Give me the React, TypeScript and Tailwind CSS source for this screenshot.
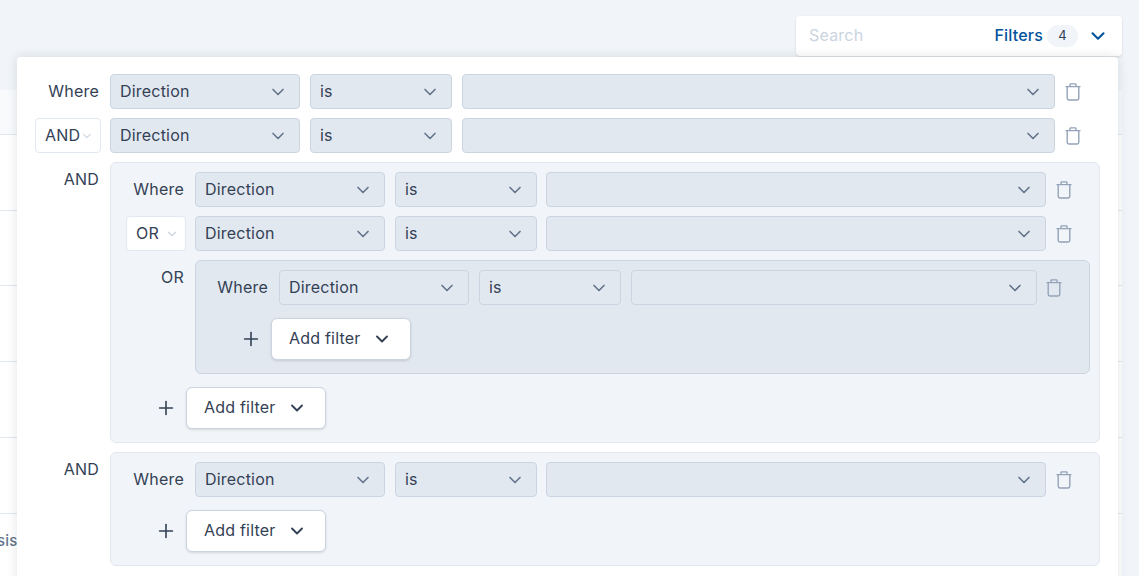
import type { ReactNode } from 'react';
import { ChevronDown, Plus } from 'lucide-react';

function Trash({ className = '' }: { className?: string }) {
  return (
    <svg width="20" height="20" viewBox="0 0 20 20" fill="none" stroke="currentColor" strokeWidth="1.4" className={`text-[#94a3b8] shrink-0 ${className}`}>
      <path d="M2.5 4.6h15M7 4.6V2.6c0-.4.3-.7.7-.7h4.6c.4 0 .7.3.7.7v2M4.2 4.6v11.7c0 1 .7 1.7 1.7 1.7h8.2c1 0 1.7-.7 1.7-1.7V4.6" />
    </svg>
  );
}

function Select({ label, className }: { label?: string; className: string }) {
  return (
    <div className={`h-[35px] flex items-center justify-between rounded border border-[#cbd5e1] bg-[#e2e8f0] pl-[9px] pr-[11px] text-[#334155] ${className}`}>
      <span className="pb-[2px]">{label}</span>
      <ChevronDown className="h-[20px] w-[20px] text-[#64748b]" strokeWidth={2} />
    </div>
  );
}

// the three selects + delete icon, same in every level
function FilterFields({ valueWidth, valueGap, trashClass }: { valueWidth: string; valueGap: string; trashClass: string }) {
  return (
    <>
      <Select label="Direction" className="w-[190px]" />
      <Select label="is" className="w-[142px] ml-[10px]" />
      <Select className={`${valueWidth} ${valueGap}`} />
      <Trash className={trashClass} />
    </>
  );
}

function Conjunction({ label, width }: { label: string; width: string }) {
  return (
    <div className={`h-[35px] ${width} flex items-center justify-between rounded border border-[#e2e8f0] bg-white pl-[9px] pr-[6px] text-[#334155]`}>
      <span className="pb-[2px]">{label}</span>
      <ChevronDown className="h-[14px] w-[14px] text-[#cbd5e1]" />
    </div>
  );
}

function AddFilter() {
  return (
    <div className="flex items-center">
      <Plus className="h-[22px] w-[22px] text-[#334155]" strokeWidth={1.75} />
      <div className="ml-[9px] h-[42px] w-[140px] flex items-center justify-between rounded-md border border-[#cbd5e1] bg-white pl-[17px] pr-[18px] text-[#334155] shadow-sm">
        <span className="pb-[2px]">Add filter</span>
        <ChevronDown className="h-[20px] w-[20px]" strokeWidth={2.25} />
      </div>
    </div>
  );
}

function GroupRow({ children }: { children: ReactNode }) {
  return (
    <div className="flex items-center">
      <div className="w-[73px] shrink-0 flex justify-end text-[#334155]">{children}</div>
      <div className="ml-[11px] flex items-center">
        <FilterFields valueWidth="w-[500px]" valueGap="ml-[9px]" trashClass="ml-[8px]" />
      </div>
    </div>
  );
}

function Table() {
  return (
    <div className="mr-[17px]">
      <div className="h-[45px] bg-[#f8fafc] border-b border-[#e2e8f0]" />
      <div className="h-[76px] bg-white border-b border-[#e2e8f0]" />
      <div className="h-[75px] bg-white border-b border-[#e2e8f0]" />
      <div className="h-[76px] bg-white border-b border-[#e2e8f0]" />
      <div className="h-[76px] bg-white border-b border-[#e2e8f0]" />
      <div className="h-[76px] bg-white border-b border-[#e2e8f0]" />
      <div className="h-[63px] bg-white pt-[16px] text-[15px] font-medium text-[#64748b]">
        <span className="-ml-[3px] block">sis</span>
      </div>
    </div>
  );
}

export default function App() {
  return (
    <div
      className="relative h-[576px] w-[1139px] overflow-hidden bg-[#f1f5f9] text-[16px] tracking-[0.2px]"
      style={{ fontFamily: 'Inter, "Noto Sans", sans-serif' }}
    >
      <div className="h-[90px] flex justify-end pt-[16px] pr-[17px]">
        <div className="h-[40px] w-[326px] flex items-center rounded bg-white pl-[13px] pr-[13px] shadow-sm">
          <span className="flex-1 pb-[2px] text-[#cbd5e1]">Search</span>
          <span className="pb-[2px] text-[#01539b] font-medium">Filters</span>
          <span className="ml-[4px] h-[22px] w-[31px] flex items-center justify-center rounded-full bg-[#f1f5f9] text-[13px] text-[#334155]">4</span>
          <ChevronDown className="ml-[9px] h-[22px] w-[22px] text-[#01539b]" strokeWidth={2.25} />
        </div>
      </div>
      <Table />

      <div className="absolute left-[17px] top-[57px] w-[1101px] h-[560px] rounded bg-white shadow-[0_0_12px_rgba(15,23,42,0.12)] pt-[17px]">
        <div className="flex flex-col gap-[9px]">
          <div className="flex items-center">
            <div className="w-[93px] shrink-0 pr-[11px] pb-[2px] text-right text-[#334155]">Where</div>
            <FilterFields valueWidth="w-[593px]" valueGap="ml-[10px]" trashClass="ml-[8px]" />
          </div>
          <div className="flex items-center">
            <div className="w-[93px] shrink-0 flex justify-end pr-[9px]"><Conjunction label="AND" width="w-[66px]" /></div>
            <FilterFields valueWidth="w-[593px]" valueGap="ml-[10px]" trashClass="ml-[8px]" />
          </div>

          <div className="flex">
            <div className="w-[82px] text-right text-[#334155] pt-[5px] shrink-0">AND</div>
            <div className="ml-[11px] h-[281px] w-[990px] rounded-md border border-[#e2e8f0] bg-[#f1f5f9] pt-[9px]">
              <div className="flex flex-col gap-[9px]">
                <GroupRow><span className="pb-[2px]">Where</span></GroupRow>
                <GroupRow><Conjunction label="OR" width="w-[60px] -mr-[2px]" /></GroupRow>
                <div className="flex">
                  <div className="w-[73px] text-right text-[#334155] pt-[5px] shrink-0">OR</div>
                  <div className="ml-[11px] h-[114px] w-[895px] rounded-md border border-[#cbd5e1] bg-[#e2e8f0] pt-[9px]">
                    <div className="flex items-center">
                      <div className="w-[72px] pb-[2px] text-right text-[#334155] shrink-0">Where</div>
                      <div className="ml-[11px] flex items-center">
                        <FilterFields valueWidth="w-[406px]" valueGap="ml-[10px]" trashClass="ml-[7px]" />
                      </div>
                    </div>
                    <div className="ml-[44px] mt-[13px]"><AddFilter /></div>
                  </div>
                </div>
                <div className="ml-[44px] mt-[4px]"><AddFilter /></div>
              </div>
            </div>
          </div>

          <div className="flex">
            <div className="w-[82px] text-right text-[#334155] pt-[5px] shrink-0">AND</div>
            <div className="ml-[11px] h-[114px] w-[990px] rounded-md border border-[#e2e8f0] bg-[#f1f5f9] pt-[9px]">
              <GroupRow><span className="pb-[2px]">Where</span></GroupRow>
              <div className="ml-[44px] mt-[13px]"><AddFilter /></div>
            </div>
          </div>
        </div>
      </div>
    </div>
  );
}
